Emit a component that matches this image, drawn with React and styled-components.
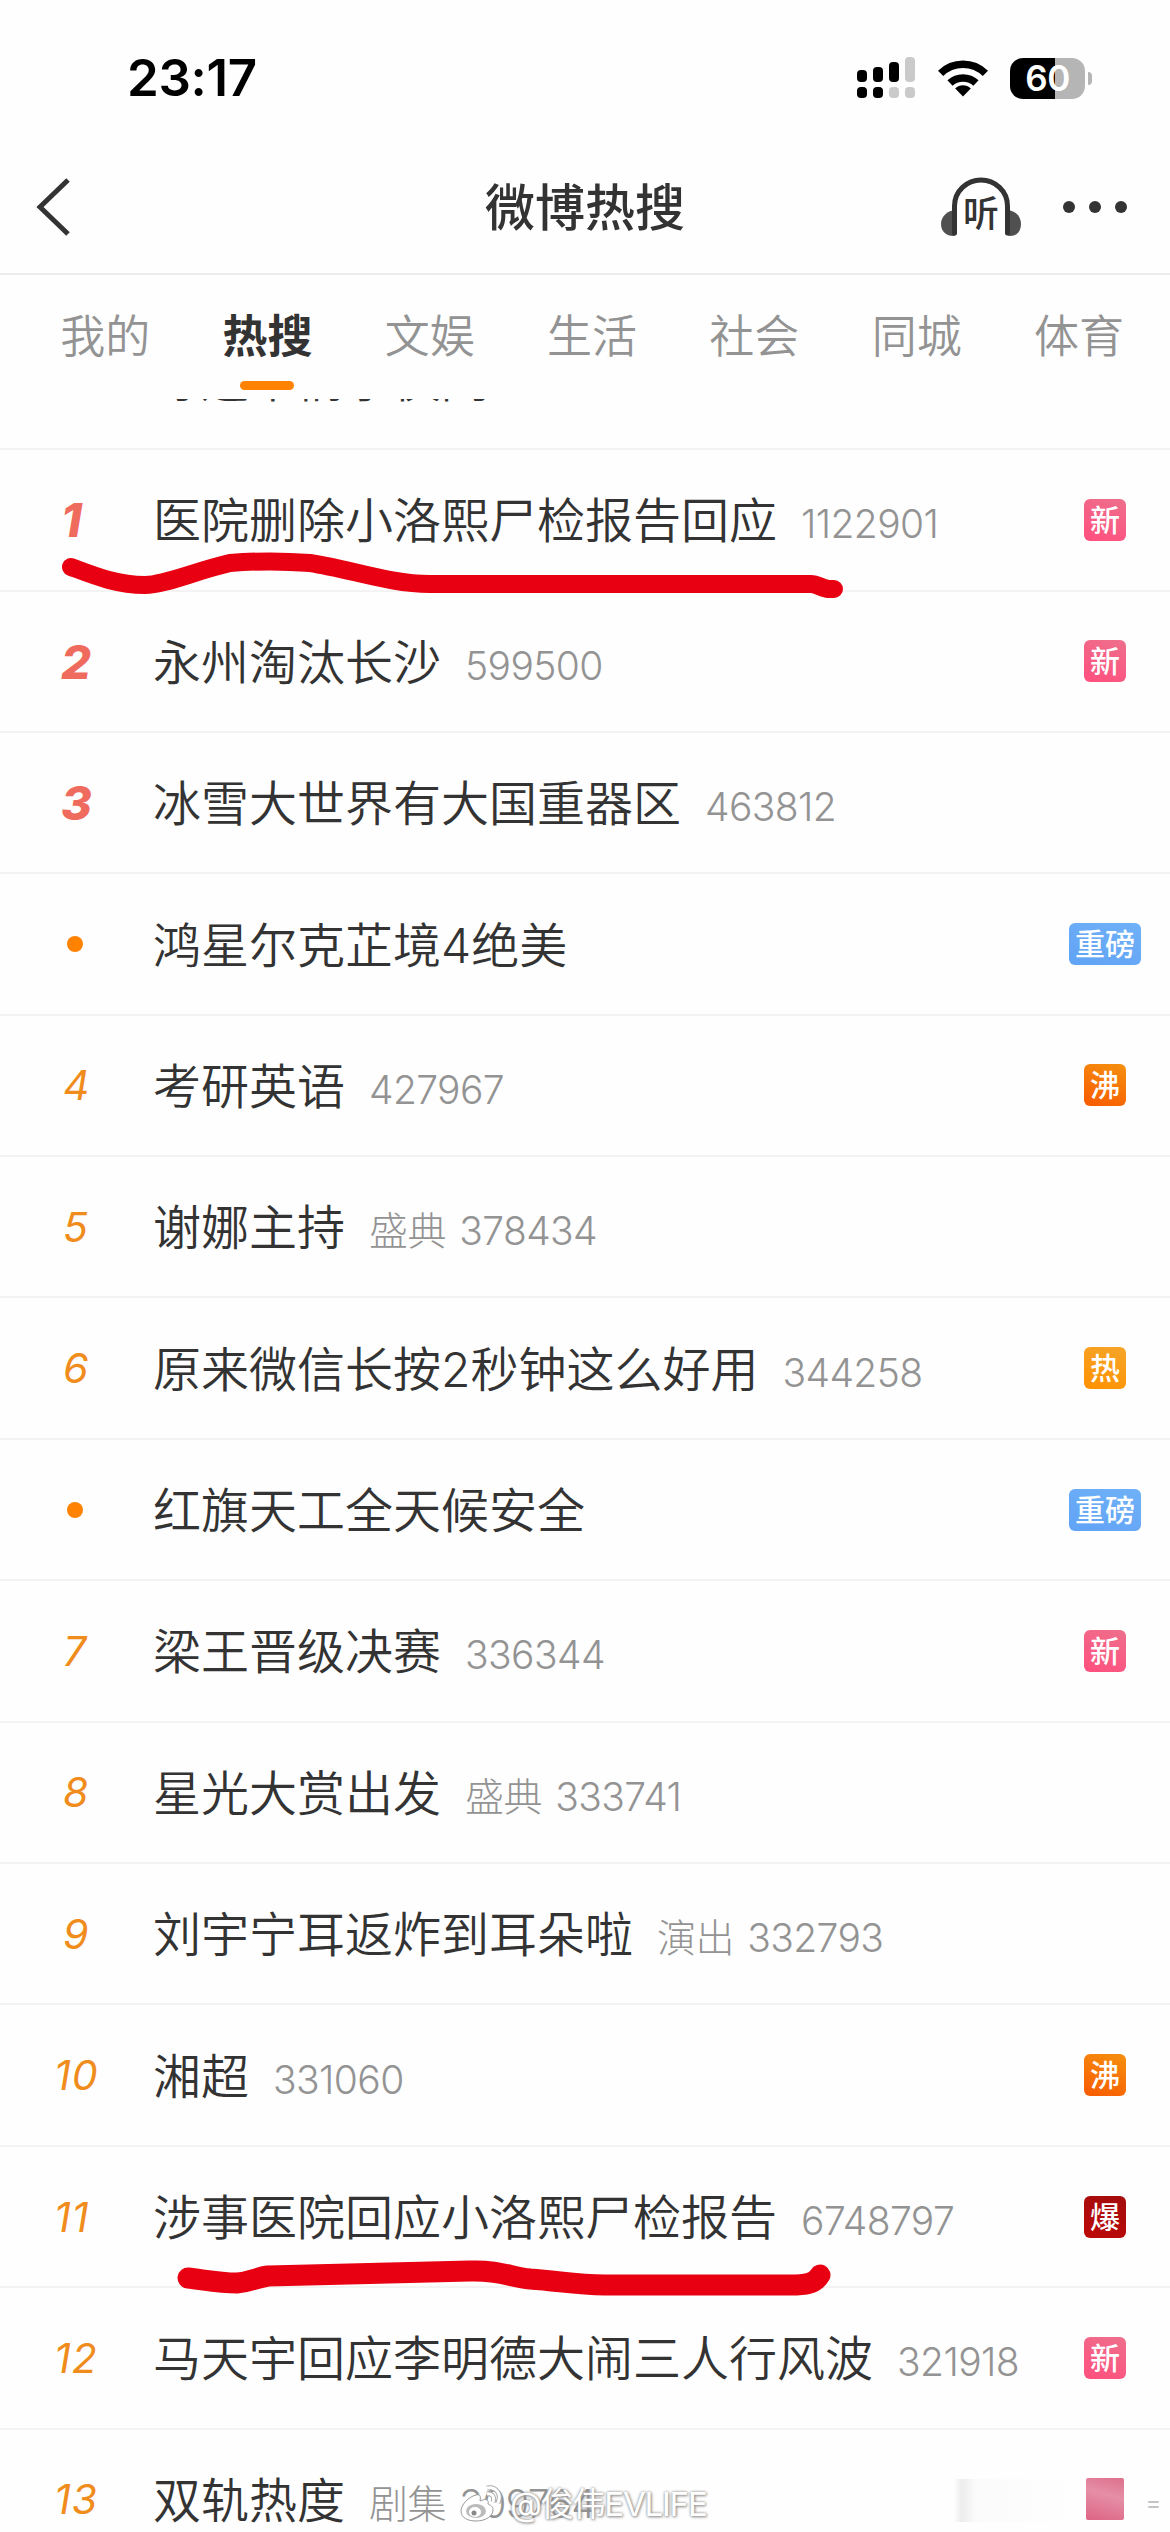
import styled, { createGlobalStyle } from 'styled-components';

const GlobalStyle = createGlobalStyle`
  * {
    box-sizing: border-box;
  }

  body {
    margin: 0;
    background: #fefefe;
  }
`;

const Page = styled.div`
  position: relative;
  display: flex;
  flex-direction: column;
  width: 1170px;
  height: 2532px;
  overflow: hidden;
  background: #fefefe;
  color: #333333;
  font-family: Inter, 'Noto Sans CJK SC', sans-serif;
`;

const StatusBar = styled.div`
  display: flex;
  justify-content: space-between;
  align-items: center;
  flex: none;
  height: 140px;
  padding: 16px 78px 0 127px;
`;

const Clock = styled.div`
  font-size: 51px;
  font-weight: 600;
  letter-spacing: -0.3px;
  line-height: 60px;
  color: #000;
`;

const StatusIcons = styled.div`
  display: flex;
  align-items: center;
  gap: 22px;
`;

const Battery = styled.div`
  display: flex;
  align-items: center;
  gap: 3px;
`;

const BatteryBody = styled.div`
  width: 75px;
  height: 41px;
  border-radius: 13px;
  background: linear-gradient(90deg, #000 60%, #b5b5b5 60%);
  color: #fff;
  font-size: 35px;
  font-weight: 600;
  letter-spacing: -0.5px;
  line-height: 41px;
  text-align: center;
`;

const BatteryTip = styled.div`
  width: 4px;
  height: 13px;
  border-radius: 0 5px 5px 0;
  background: #b5b5b5;
`;

const NavBar = styled.div`
  display: grid;
  grid-template-columns: 1fr auto 1fr;
  align-items: center;
  flex: none;
  height: 135px;
  padding: 0 43px 0 35px;
  border-bottom: 2px solid #ebebeb;
`;

const NavTitle = styled.div`
  padding: 3px 0 0 8px;
  font-size: 50px;
  font-weight: 500;
  line-height: 60px;
`;

const NavActions = styled.div`
  display: flex;
  align-items: center;
  justify-content: flex-end;
  gap: 41px;
`;

const Listen = styled.div`
  position: relative;
  display: flex;
  width: 81px;
  height: 60px;
`;

const ListenText = styled.span`
  position: absolute;
  left: 22px;
  top: 17px;
  font-size: 36px;
  font-weight: 500;
  line-height: 40px;
`;

const Tabs = styled.div`
  display: flex;
  flex: none;
  height: 124px;
  padding-left: 24px;
`;

const Tab = styled.div`
  display: flex;
  flex-direction: column;
  align-items: center;
  flex: none;
  width: 162.3px;
  padding-top: 35px;
  color: ${props => (props.$active ? '#333333' : '#939393')};
  font-size: 45px;
  font-weight: ${props => (props.$active ? '700' : '350')};
  line-height: 54px;

  &::after {
    content: '';
    width: 54px;
    height: 9px;
    margin-top: 17px;
    border-radius: 5px;
    background: ${props => (props.$active ? '#ff8200' : 'transparent')};
  }
`;

const List = styled.div`
  display: flex;
  flex-direction: column;
  justify-content: flex-end;
  flex: none;
  overflow: hidden;
  height: ${props => props.$height}px;
`;

const Row = styled.div`
  display: flex;
  align-items: center;
  flex: none;
  height: 141.4px;
  padding: 0 29px 0 0;
  border-bottom: 2px solid #f3f3f3;
`;

const Rank = styled.div`
  flex: none;
  width: 153px;
  padding-left: ${props => (props.$wide ? '54px' : props.$top ? '61px' : '63px')};
  color: ${props => (props.$top ? '#ef6b5e' : '#f08c1c')};
  font-size: ${props => (props.$top ? '47px' : '41px')};
  font-style: italic;
  font-weight: ${props => (props.$top ? '800' : '400')};
  letter-spacing: ${props => (props.$wide ? '1px' : '0')};
`;

const Dot = styled.div`
  width: 16px;
  height: 16px;
  margin-left: 4px;
  border-radius: 50%;
  background: #ff8200;
`;

const Topic = styled.div`
  display: flex;
  align-items: baseline;
  flex: 1;
  padding-top: 3px;
  white-space: nowrap;
`;

const TopicTitle = styled.span`
  font-size: 48px;
  font-weight: 350;
  line-height: 60px;
`;

const Heat = styled.span`
  margin-left: 24px;
  color: #939393;
  font-size: 39px;
  font-weight: 300;
  letter-spacing: -0.6px;
  word-spacing: 3px;
`;

const badgeColors = {
  新: 'linear-gradient(20deg, #ff4f7e, #ee6f8c)',
  沸: 'linear-gradient(20deg, #f85a00, #f5900f)',
  热: 'linear-gradient(20deg, #ff9100, #f5a52a)',
  爆: 'linear-gradient(20deg, #bd0808, #a30d0d)',
  重磅: 'linear-gradient(20deg, #61a3f5, #6fb1f7)',
};

const BadgeSlot = styled.div`
  display: flex;
  justify-content: center;
  flex: none;
  width: 72px;
`;

const Badge = styled.div`
  width: ${props => (props.$wide ? '72px' : '42px')};
  height: 42px;
  border-radius: 6px;
  background: ${props => props.$background};
  color: #fff;
  font-size: 30px;
  font-weight: 500;
  line-height: 42px;
  text-align: center;
`;

const BlankBadge = styled.div`
  width: 38px;
  height: 42px;
  border-radius: 2px;
  background: linear-gradient(15deg, #dd6483, #e58fa6 60%, #de6f8b);
`;

const Overlay = styled.svg`
  position: absolute;
  inset: 0;
`;

const Watermark = styled.div`
  position: absolute;
  left: 460px;
  top: 2479px;
  display: flex;
  align-items: center;
  gap: 8px;
  color: #fff;
  font-size: 33px;
  font-weight: 400;
  letter-spacing: -1.2px;
  line-height: 50px;
  text-shadow: 0 0 3px #888, 1px 1px 3px #999;
`;

const Smudge = styled.div`
  position: absolute;
  left: 950px;
  top: 2479px;
  width: 130px;
  height: 43px;
  background: linear-gradient(90deg, transparent 3%, #ececec 9%, #f1f1f1 13%, #fbfbfb 20%, transparent);
`;

const topics = [
  { rank: '7', title: '寻逛早情求侠闲' },
  { rank: '1', title: '医院删除小洛熙尸检报告回应', heat: '1122901', badge: '新' },
  { rank: '2', title: '永州淘汰长沙', heat: '599500', badge: '新' },
  { rank: '3', title: '冰雪大世界有大国重器区', heat: '463812' },
  { title: '鸿星尔克芷境4绝美', badge: '重磅' },
  { rank: '4', title: '考研英语', heat: '427967', badge: '沸' },
  { rank: '5', title: '谢娜主持', heat: '盛典 378434' },
  { rank: '6', title: '原来微信长按2秒钟这么好用', heat: '344258', badge: '热' },
  { title: '红旗天工全天候安全', badge: '重磅' },
  { rank: '7', title: '梁王晋级决赛', heat: '336344', badge: '新' },
  { rank: '8', title: '星光大赏出发', heat: '盛典 333741' },
  { rank: '9', title: '刘宇宁耳返炸到耳朵啦', heat: '演出 332793' },
  { rank: '10', title: '湘超', heat: '331060', badge: '沸' },
  { rank: '11', title: '涉事医院回应小洛熙尸检报告', heat: '6748797', badge: '爆' },
  { rank: '12', title: '马天宇回应李明德大闹三人行风波', heat: '321918', badge: '新' },
  { rank: '13', title: '双轨热度', heat: '剧集 309764', blank: true },
];

const tabs = ['我的', '热搜', '文娱', '生活', '社会', '同城', '体育'];

const SignalIcon = () => (
  <svg width="59" height="42" viewBox="0 0 59 42">
    <g fill="#000">
      <rect x="0" y="13" width="10" height="12" rx="4" />
      <rect x="16" y="10" width="10" height="15" rx="4" />
      <rect x="32" y="5" width="10" height="20" rx="4" />
      <rect x="0" y="30" width="10" height="11" rx="4" />
      <rect x="16" y="30" width="10" height="11" rx="4" />
    </g>
    <g fill="#cacaca">
      <rect x="48" y="0" width="10" height="25" rx="4" />
      <rect x="32" y="30" width="10" height="11" rx="4" />
      <rect x="48" y="30" width="10" height="11" rx="4" />
    </g>
  </svg>
);

const WifiIcon = () => (
  <svg width="50" height="38" viewBox="0 0 50 38">
    <path d="M25 37.5 17.2 29.5C21.5 25.3 28.5 25.3 32.8 29.5Z" />
    <path d="M12 24C19.2 17.2 30.8 17.2 38 24" fill="none" stroke="#000" strokeWidth="7.5" />
    <path d="M2.6 14.4C15 2.2 35 2.2 47.4 14.4" fill="none" stroke="#000" strokeWidth="7.5" />
  </svg>
);

const BackIcon = () => (
  <svg width="36" height="58" viewBox="0 0 36 58" fill="none" stroke="#333" strokeWidth="5">
    <path d="M33 2 5 29 33 56" />
  </svg>
);

const HeadphoneIcon = () => (
  <svg width="81" height="60" viewBox="0 0 81 60">
    <path d="M16 33C7 33 0 39 0 47S6 59 12 59Q16 59 16 54Z" fill="#505050" />
    <path d="M65 33C74 33 80 39 80 47S75 59 69 59Q65 59 65 54Z" fill="#505050" />
    <path
      d="M13.5 56V29C13.5 14 26 3 40 3S66.500 14 66.500 29V56"
      fill="none"
      stroke="#333"
      strokeWidth="5"
      strokeLinecap="round"
    />
  </svg>
);

const MoreIcon = () => (
  <svg width="64" height="12" viewBox="0 0 64 12" fill="#333">
    <circle cx="6" cy="6" r="6" />
    <circle cx="32" cy="6" r="6" />
    <circle cx="58" cy="6" r="6" />
  </svg>
);

const WeiboIcon = () => (
  <svg width="42" height="38" viewBox="0 0 42 38">
    <path
      d="M16 10C8 12 1 20 1 26C1 33 8 36 16 36C26 36 33 31 33 25C33 21 30 20 28 19C29 15 27 13 20 16C21 11 20 9 16 10Z"
      fill="#fff"
      stroke="#999"
    />
    <ellipse cx="16" cy="26" rx="10" ry="7" fill="#bbb" />
    <ellipse cx="15" cy="27" rx="6" ry="5" fill="#fff" />
    <circle cx="14" cy="28" r="2.5" fill="#888" />
    <path d="M27 3C36 1 42 9 38 18M27 9C32 8 35 12 33 17" fill="none" stroke="#aaa" strokeWidth="5" />
    <path d="M27 3C36 1 42 9 38 18M27 9C32 8 35 12 33 17" fill="none" stroke="#fff" strokeWidth="3" />
  </svg>
);

const TopicRow = ({ rank, title, heat, badge, blank }) => (
  <Row>
    <Rank $top={Number(rank) <= 3} $wide={Number(rank) > 9}>
      {rank || <Dot />}
    </Rank>
    <Topic>
      <TopicTitle>{title}</TopicTitle>
      {heat && <Heat>{heat}</Heat>}
    </Topic>
    <BadgeSlot>
      {badge && (
        <Badge $wide={badge.length > 1} $background={badgeColors[badge]}>
          {badge}
        </Badge>
      )}
      {blank && <BlankBadge />}
    </BadgeSlot>
  </Row>
);

const App = () => (
  <Page>
    <GlobalStyle />
    <StatusBar>
      <Clock>23:17</Clock>
      <StatusIcons>
        <SignalIcon />
        <WifiIcon />
        <Battery>
          <BatteryBody>60</BatteryBody>
          <BatteryTip />
        </Battery>
      </StatusIcons>
    </StatusBar>
    <NavBar>
      <BackIcon />
      <NavTitle>微博热搜</NavTitle>
      <NavActions>
        <Listen>
          <HeadphoneIcon />
          <ListenText>听</ListenText>
        </Listen>
        <MoreIcon />
      </NavActions>
    </NavBar>
    <Tabs>
      {tabs.map(tab => (
        <Tab key={tab} $active={tab === '热搜'}>
          {tab}
        </Tab>
      ))}
    </Tabs>
    {/* scrolled so that only the foot of the first topic shows */}
    <List $height={51}>
      <TopicRow {...topics[0]} />
    </List>
    <List $height={141.4 * 15}>
      {topics.slice(1).map(topic => (
        <TopicRow key={topic.title} {...topic} />
      ))}
    </List>
    {/* hand-drawn red marker lines */}
    <Overlay width="1170" height="2532" fill="none" stroke="#e80012" strokeLinecap="round" strokeLinejoin="round">
      <path
        strokeWidth="18"
        d="M71 567C95 576 117 585 145 585C165 585 195 571 230 563C255 561 285 561 310 563C350 569 390 584 430 584H811C818 584 822 589 830 589H834"
      />
      <path
        strokeWidth="21"
        d="M188 2278C205 2280 220 2283 237 2283C250 2282 255 2278 268 2276L470 2271C500 2270 510 2277 530 2279C560 2281 575 2285 605 2285H790C805 2285 815 2284 820 2275"
      />
      <path stroke="#c4c4c4" strokeWidth="2" d="M1149 2502H1158M1149 2507H1158" />
    </Overlay>
    <Smudge />
    <Watermark>
      <WeiboIcon />
      @俊伟EVLIFE
    </Watermark>
  </Page>
);

export default App;
